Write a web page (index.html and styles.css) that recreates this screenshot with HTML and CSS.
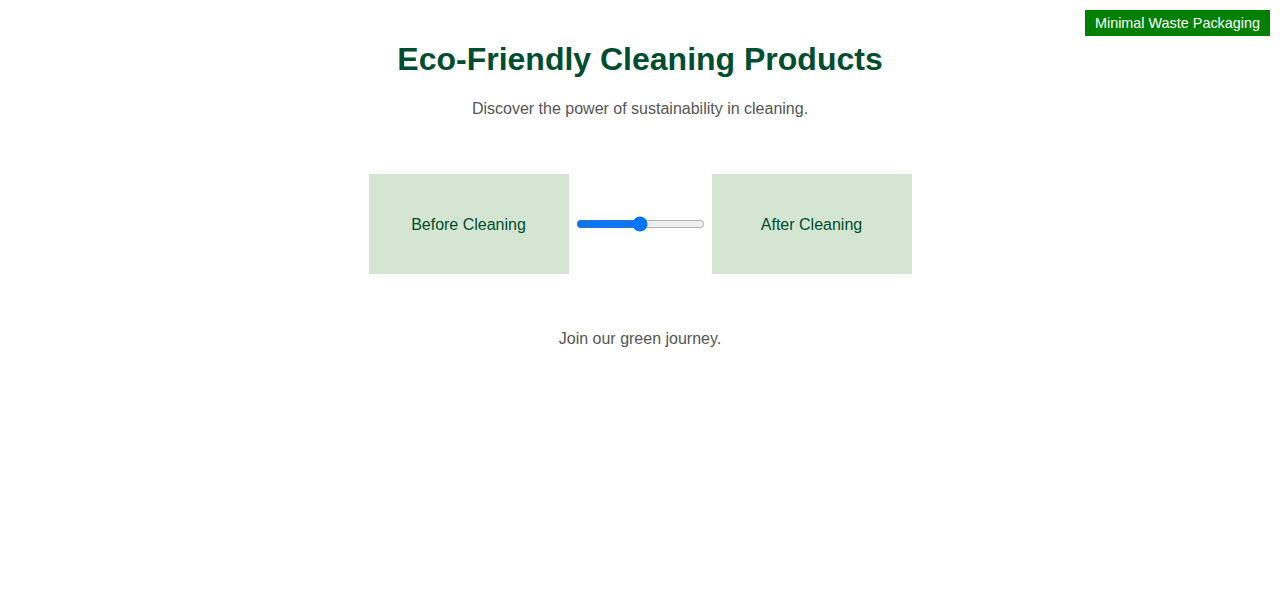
FILE: index.html
```html
<!DOCTYPE html>
<html lang="en">
<head>
<meta charset="utf-8">
<title>Eco-Friendly Cleaning Products</title>
<link rel="stylesheet" href="styles.css">
</head>
<body>
<div class="badge">Minimal Waste Packaging</div>
<main class="page">
  <h1 class="title">Eco-Friendly Cleaning Products</h1>
  <p class="lead">Discover the power of sustainability in cleaning.</p>
  <div class="compare">
    <div class="panel">Before Cleaning</div>
    <input class="slider" type="range" min="0" max="100" value="50">
    <div class="panel">After Cleaning</div>
  </div>
  <p class="closing">Join our green journey.</p>
</main>
</body>
</html>
```
FILE: styles.css
```css
html, body {
  margin: 0;
  padding: 0;
  background: #ffffff;
}
body {
  font-family: "Liberation Sans", Arial, sans-serif;
  color: #555555;
}
.page {
  padding: 20px;
  text-align: center;
}
.title {
  font-size: 32px;
  font-weight: bold;
  color: #004d2f;
  margin: 21px 0 22px;
  line-height: 37px;
}
.lead {
  font-size: 16px;
  line-height: 18px;
  margin: 0;
}
.compare {
  display: flex;
  justify-content: center;
  align-items: center;
  gap: 5px;
  margin-top: 56px;
}
.panel {
  box-sizing: border-box;
  width: 200px;
  height: 100px;
  padding-top: 2px;
  background: #d4e6d2;
  color: #004d2f;
  font-size: 16px;
  display: flex;
  align-items: center;
  justify-content: center;
}
.slider {
  width: 129px;
  margin: 2px;
}
.closing {
  font-size: 16px;
  line-height: 18px;
  margin: 56px 0 0;
}
.badge {
  position: absolute;
  top: 10px;
  right: 10px;
  background: #008000;
  color: #ffffff;
  font-size: 14.4px;
  line-height: 16px;
  padding: 5px 10px;
}
```
